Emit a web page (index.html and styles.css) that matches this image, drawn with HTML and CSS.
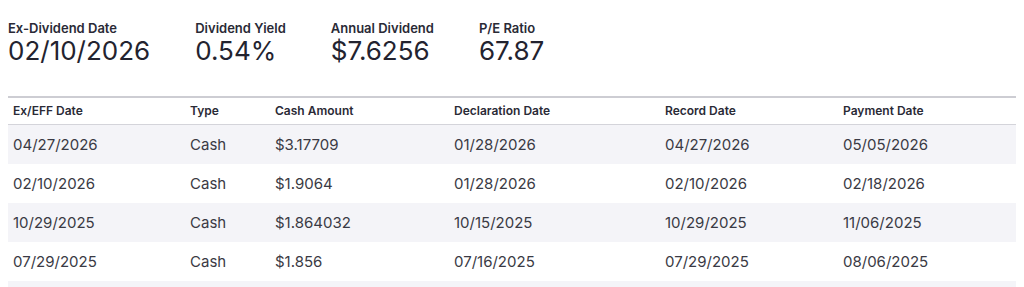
FILE: index.html
```html
<!DOCTYPE html>
<html>
<head>
<meta charset="utf-8">
<link rel="stylesheet" href="styles.css">
</head>
<body>
<div class="metrics">
  <div class="metric"><div class="label">Ex-Dividend Date</div><div class="value">02/10/2026</div></div>
  <div class="metric"><div class="label">Dividend Yield</div><div class="value">0.54%</div></div>
  <div class="metric"><div class="label">Annual Dividend</div><div class="value">$7.6256</div></div>
  <div class="metric"><div class="label">P/E Ratio</div><div class="value">67.87</div></div>
</div>
<table class="divs">
  <thead>
    <tr>
      <th class="c1">Ex/EFF Date</th>
      <th class="c2">Type</th>
      <th class="c3">Cash Amount</th>
      <th class="c4">Declaration Date</th>
      <th class="c5">Record Date</th>
      <th class="c6">Payment Date</th>
    </tr>
  </thead>
  <tbody>
    <tr><td>04/27/2026</td><td>Cash</td><td>$3.17709</td><td>01/28/2026</td><td>04/27/2026</td><td>05/05/2026</td></tr>
    <tr><td>02/10/2026</td><td>Cash</td><td>$1.9064</td><td>01/28/2026</td><td>02/10/2026</td><td>02/18/2026</td></tr>
    <tr><td>10/29/2025</td><td>Cash</td><td>$1.864032</td><td>10/15/2025</td><td>10/29/2025</td><td>11/06/2025</td></tr>
    <tr><td>07/29/2025</td><td>Cash</td><td>$1.856</td><td>07/16/2025</td><td>07/29/2025</td><td>08/06/2025</td></tr>
    <tr class="empty"><td></td><td></td><td></td><td></td><td></td><td></td></tr>
  </tbody>
</table>
</body>
</html>
```
FILE: styles.css
```css
body {
  margin: 8px;
  font-family: Inter, "Liberation Sans", sans-serif;
  color: #23232f;
  background: #fff;
}
.metrics {
  display: flex;
  gap: 45px;
  padding-top: 12px;
}
.label {
  font-size: 13px;
  font-weight: 600;
  line-height: 16px;
  color: #2a2a36;
}
.value {
  font-size: 26px;
  line-height: 30px;
  color: #23232f;
}
.divs {
  margin-top: 30px;
  width: 100%;
  border-collapse: collapse;
  border-top: 2px solid #cdcdd3;
}
.divs th {
  font-size: 12px;
  font-weight: 600;
  text-align: left;
  padding: 0 5px 1px;
  height: 25px;
  vertical-align: middle;
  border-bottom: 1px solid #d4d4da;
  color: #2a2a36;
}
.divs td {
  font-size: 15px;
  padding: 0 5px;
  height: 39px;
  color: #3a3a44;
}
.divs tbody tr:nth-child(odd) { background: #f4f4f8; }
.c1 { width: 167px; }
.c2 { width: 75px; }
.c3 { width: 169px; }
.c4 { width: 201px; }
.c5 { width: 168px; }
```
